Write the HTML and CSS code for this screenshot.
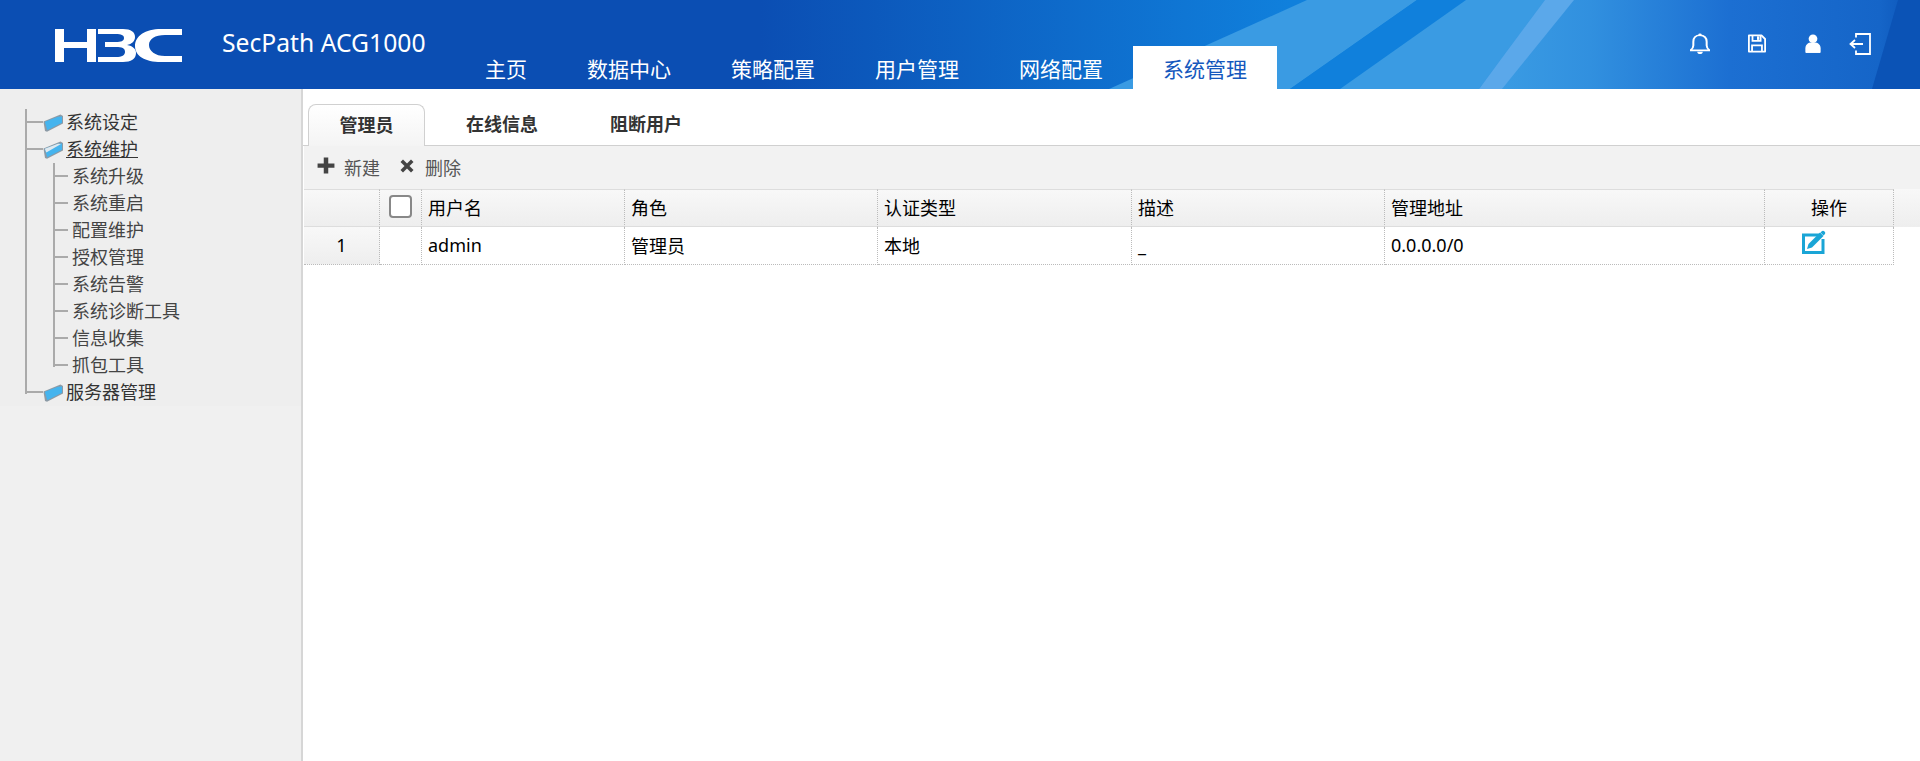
FILE: index.html
```html
<!DOCTYPE html>
<html lang="zh-CN">
<head>
<meta charset="utf-8">
<title>SecPath ACG1000</title>
<link rel="stylesheet" href="styles.css">
</head>
<body>
<header class="top">
  <svg class="top-art" viewBox="0 0 1920 89" preserveAspectRatio="none" aria-hidden="true">
    <polygon points="1109,89 1307,0 1417,0 1290,89" fill="#3a9be3"/>
    <polygon points="1290,89 1417,0 1466,0 1340,89" fill="#1080dc"/>
    <polygon points="1340,89 1466,0 1545,0 1479,89" fill="#3a9be3"/>
    <polygon points="1479,89 1545,0 1574,0 1502,89" fill="#5ba8ea"/>
    <polygon points="1872,89 1898,0 1920,0 1920,89" fill="#0b53b6"/>
  </svg>
  <svg class="logo" viewBox="0 0 127 33" aria-label="H3C">
    <g fill="#fff">
      <rect x="0" y="0" width="9" height="33"/>
      <rect x="32" y="0" width="9" height="33"/>
      <rect x="9" y="13" width="23" height="6"/>
      <path d="M43 0h25c8 0 12 3 12 8 0 4-3 7-8 8 6 1 9 4 9 8 0 6-5 9-13 9H43v-5h18c6 0 9-2 9-5 0-4-3-5-9-5H50v-5h11c5 0 8-1 8-4s-3-4-8-4H43z"/>
      <path d="M127 0v6h-17c-10 0-16 4-16 10s6 11 16 11h17v6h-21c-16 0-26-6-26-16S90 0 106 0z"/>
    </g>
  </svg>
  <div class="product">SecPath ACG1000</div>
  <nav class="nav">
    <a class="nav-item">主页</a>
    <a class="nav-item">数据中心</a>
    <a class="nav-item">策略配置</a>
    <a class="nav-item">用户管理</a>
    <a class="nav-item">网络配置</a>
    <a class="nav-item active">系统管理</a>
  </nav>
  <div class="tools">
    <svg class="tool t-bell" viewBox="1 0 18 24" preserveAspectRatio="none" aria-hidden="true"><path d="M10 2.500c-4 0-6 3-6 7v4c0 2.500-1 4-2.600 5.500h17.200C17 17.500 16 16 16 13.500v-4c0-4-2-7-6-7z" fill="none" stroke="#fff" stroke-width="1.800" stroke-linejoin="round"/><circle cx="10" cy="2" r="1.500" fill="#fff"/><path d="M7.500 20.500h5c0 1.500-1 2.500-2.500 2.500s-2.500-1-2.500-2.500z" fill="#fff"/></svg>
    <svg class="tool t-save" viewBox="0 0 20 20" aria-hidden="true"><path d="M1 1h14l4 4v14H1z" fill="none" stroke="#fff" stroke-width="2" stroke-linejoin="round"/><path d="M5 1v6h9V1" fill="none" stroke="#fff" stroke-width="2"/><rect x="10" y="2" width="2.500" height="4" fill="#fff"/><path d="M4.500 19v-7h11v7" fill="none" stroke="#fff" stroke-width="2"/></svg>
    <svg class="tool t-user" viewBox="0 0 16 20" aria-hidden="true"><circle cx="8" cy="5" r="4.600" fill="#fff"/><path d="M0.500 19.500v-5c0-3 2.500-5 4.500-5h6c2 0 4.500 2 4.500 5v5z" fill="#fff" stroke="#fff" stroke-linejoin="round"/></svg>
    <svg class="tool t-exit" viewBox="0 0 22 22" aria-hidden="true"><path d="M7 4.500V1h14v20H7v-3.500" fill="none" stroke="#fff" stroke-width="1.800"/><path d="M14 11H2M6 7l-4.500 4L6 15" fill="none" stroke="#fff" stroke-width="1.800"/></svg>
  </div>
</header>

<div class="body">
  <aside class="side">
    <ul class="tree">
      <li class="row"><span class="conn"><i></i></span><svg class="folder" viewBox="0 0 20 18" aria-hidden="true"><use href="#fld"/></svg><span class="lbl">系统设定</span></li>
      <li class="row"><span class="conn"><i></i></span><svg class="folder" viewBox="0 0 20 18" aria-hidden="true"><use href="#fld-open"/></svg><span class="lbl current">系统维护</span></li>
      <li class="row"><span class="vl"></span><span class="conn sub"><i></i></span><span class="lbl sublbl">系统升级</span></li>
      <li class="row"><span class="vl"></span><span class="conn sub"><i></i></span><span class="lbl sublbl">系统重启</span></li>
      <li class="row"><span class="vl"></span><span class="conn sub"><i></i></span><span class="lbl sublbl">配置维护</span></li>
      <li class="row"><span class="vl"></span><span class="conn sub"><i></i></span><span class="lbl sublbl">授权管理</span></li>
      <li class="row"><span class="vl"></span><span class="conn sub"><i></i></span><span class="lbl sublbl">系统告警</span></li>
      <li class="row"><span class="vl"></span><span class="conn sub"><i></i></span><span class="lbl sublbl">系统诊断工具</span></li>
      <li class="row"><span class="vl"></span><span class="conn sub"><i></i></span><span class="lbl sublbl">信息收集</span></li>
      <li class="row"><span class="vl"></span><span class="conn sub last"><i></i></span><span class="lbl sublbl">抓包工具</span></li>
      <li class="row"><span class="conn last"><i></i></span><svg class="folder" viewBox="0 0 20 18" aria-hidden="true"><use href="#fld"/></svg><span class="lbl">服务器管理</span></li>
    </ul>
    <svg class="defs" aria-hidden="true">
      <defs>
        <g id="fld">
          <path d="M0.500 7.500L15 1.500 17.500 0.500 20 2v7.500L4 17.800 2 17z" fill="#8d9aa5"/>
          <path d="M1.800 7.800L15 2.800 19 2.500v6.300L4.200 16.300z" fill="#45b4ee"/>
        </g>
        <g id="fld-open">
          <path d="M0.500 7.500L15 1.500 17.500 0.500 20 2v7.500L4 17.800 2 17z" fill="#8d9aa5"/>
          <path d="M1.800 7.800L15 2.800 19 2.500v6.300L4.200 16.300z" fill="#45b4ee"/>
          <path d="M1.800 7.800L15 2.800 18 3 3.300 11.500z" fill="#dfe9ef"/>
        </g>
      </defs>
    </svg>
  </aside>
  <main class="main">
    <div class="tabs">
      <a class="tab active">管理员</a>
      <a class="tab">在线信息</a>
      <a class="tab">阻断用户</a>
    </div>
    <div class="toolbar">
      <span class="btn"><svg class="btn-ico" viewBox="0 0 16 16" preserveAspectRatio="none" aria-hidden="true"><path d="M6 0.500h4V6h5.500v4H10v5.500H6V10H0.500V6H6z" fill="#444"/></svg>新建</span>
      <span class="btn"><svg class="btn-ico small" viewBox="0 0 14 14" aria-hidden="true"><path d="M3 0.500L7 4.500l4-4L13.500 3l-4 4 4 4-2.500 2.500-4-4-4 4L0.500 11l4-4-4-4z" fill="#444"/></svg>删除</span>
    </div>
    <div class="grid-wrap">
      <table class="grid">
        <colgroup>
          <col class="c-idx"><col class="c-chk"><col class="c-user"><col class="c-role"><col class="c-auth"><col class="c-desc"><col class="c-addr"><col class="c-op">
        </colgroup>
        <thead>
          <tr>
            <th></th>
            <th class="center"><span class="check"></span></th>
            <th>用户名</th><th>角色</th><th>认证类型</th><th>描述</th><th>管理地址</th>
            <th class="center">操作</th>
          </tr>
        </thead>
        <tbody>
          <tr>
            <td class="idx">1</td>
            <td></td>
            <td>admin</td><td>管理员</td><td>本地</td><td>_</td><td>0.0.0.0/0</td>
            <td class="center op"><svg class="edit" viewBox="0 0 25 24" aria-hidden="true"><path d="M19 5H1.500v17.500H21V9" fill="none" stroke="#1aa5d6" stroke-width="3"/><path d="M5 19l1.500-5L18 2.500 21.500 6 10 17.500z" fill="#1aa5d6"/><path d="M19.500 1.500c1-1 2-1 3 0s1 2 0 3l-1 1-3-3z" fill="#1aa5d6"/></svg></td>
          </tr>
        </tbody>
      </table>
    </div>
  </main>
</div>
</body>
</html>
```
FILE: styles.css
```css
* { box-sizing: border-box; }
html, body { margin: 0; padding: 0; height: 100%; overflow: hidden; }
body {
  font-family: "Noto Sans", "Noto Sans CJK SC", sans-serif;
  font-size: 18px;
  color: #000;
  background: #fff;
}
ul { list-style: none; margin: 0; padding: 0; }

.top {
  position: relative;
  height: 89px;
  display: flex;
  background: linear-gradient(90deg, #0b4eb3 0, #0b4eb3 760px, #1080dc 1290px, #1080dc 1466px, #3a9be3 1502px, #3190df 1590px, #1c6fd2 1730px, #1565c8 1880px, #0b53b6 1920px);
  overflow: hidden;
}
.top-art { position: absolute; left: 0; top: 0; width: 1920px; height: 89px; }
.logo { position: relative; width: 127px; height: 33px; margin: 29px 0 0 55px; flex: none; }
.product {
  position: relative;
  width: 233px;
  margin-left: 40px;
  padding-top: 25px;
  font-size: 24.7px;
  line-height: 36px;
  color: #fff;
  white-space: nowrap;
  flex: none;
}
.nav { position: relative; display: flex; align-items: flex-end; flex: none; }
.nav-item {
  padding: 0 30px;
  height: 43px;
  line-height: 47px;
  text-align: center;
  font-size: 21px;
  color: #fff;
  white-space: nowrap;
}
.nav-item.active { background: #fff; color: #1558bd; }
.tools {
  position: relative;
  display: flex;
  align-items: center;
  flex: none;
  margin-left: 413px;
  height: 87px;
}
.tool { display: block; flex: none; }
.t-bell { width: 20px; height: 22px; }
.t-save { width: 18px; height: 19px; margin-left: 38px; }
.t-user { width: 16px; height: 19px; margin-left: 39px; }
.t-exit { width: 22px; height: 22px; margin-left: 28px; }

.body { display: flex; height: 672px; }
.side {
  width: 303px;
  flex: none;
  background: #f0f0f0;
  border-right: 2px solid #d6d6d6;
}
.tree { background: #eee; padding: 20px 0 0 25px; color: #333; }
.row { display: flex; align-items: center; height: 27px; }
.conn { display: block; width: 18px; height: 27px; border-left: 2px solid #aaa; flex: none; align-self: flex-start; }
.conn i { display: block; height: 14px; border-bottom: 2px solid #aaa; }
.conn.last { height: 15px; }
.conn.sub { width: 15px; }
.vl { display: block; width: 28px; height: 27px; border-left: 2px solid #aaa; flex: none; }
.folder { width: 20px; height: 18px; flex: none; }
.lbl { line-height: 27px; margin-left: 3px; white-space: nowrap; }
.sublbl { margin-left: 4px; color: #444; }
.current { text-decoration: underline; }
.defs { width: 0; height: 0; display: block; }

.main { flex: 1; min-width: 0; }
.tabs {
  display: flex;
  gap: 10px;
  height: 57px;
  padding: 15px 0 0 5px;
  border-bottom: 1px solid #d0d0d0;
}
.tab {
  width: 134px;
  height: 42px;
  line-height: 41px;
  text-align: center;
  font-weight: 700;
  color: #333;
}
.tab.active {
  width: 117px;
  border: 1px solid #d0d0d0;
  border-bottom: 0;
  border-radius: 8px 8px 0 0;
  background: linear-gradient(#fff, #f4f4f4);
}
.toolbar {
  display: flex;
  align-items: center;
  height: 43px;
  padding: 0 0 2px 13px;
  background: #f2f2f2;
  color: #555;
  margin-left: 1px;
}
.btn { display: flex; align-items: center; margin-right: 20px; }
.btn-ico { width: 18px; height: 17px; margin: 0 9px 2px 0; flex: none; }
.btn-ico.small { width: 14px; height: 14px; margin: 0 11px 2px 0; }

.grid-wrap {
  background: linear-gradient(#f8f8f8, #eee) no-repeat 0 0 / 100% 38px;
  margin-left: 1px;
}
.grid { table-layout: fixed; width: 1590px; border-collapse: separate; border-spacing: 0; }
.c-idx { width: 76px; }
.c-chk { width: 42px; }
.c-user { width: 203px; }
.c-role { width: 253px; }
.c-auth { width: 254px; }
.c-desc { width: 253px; }
.c-addr { width: 380px; }
.c-op { width: 129px; }
.grid th, .grid td {
  padding: 0 6px;
  font-weight: 400;
  text-align: left;
  border-right: 1px dotted #bbb;
  white-space: nowrap;
  overflow: hidden;
}
.grid th {
  height: 38px;
  padding-bottom: 3px;
  border-top: 1px solid #ddd;
  border-bottom: 1px solid #ddd;
  background: linear-gradient(#f8f8f8, #eee);
}
.grid td {
  height: 38px;
  padding-bottom: 2px;
  border-bottom: 1px dotted #bbb;
  background: #fff;
}
.grid .center { text-align: center; padding: 0 0 3px; }
.grid td.center { padding: 0; }
.grid .idx { text-align: center; background: linear-gradient(#f8f8f8, #eee); }
.check {
  display: block;
  width: 23px;
  height: 23px;
  margin: 0 auto;
  background: #fff;
  border: 2px solid #888;
  border-radius: 4px;
}
.op { vertical-align: top; }
.edit { display: block; width: 25px; height: 24px; margin: 3px 0 0 37px; }
```
